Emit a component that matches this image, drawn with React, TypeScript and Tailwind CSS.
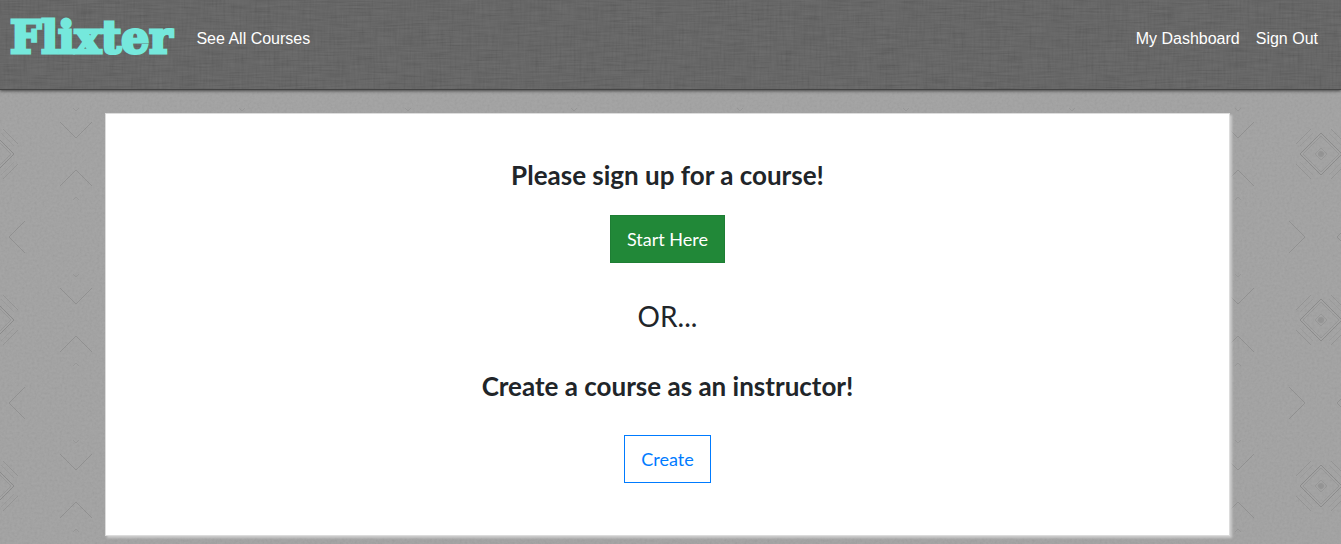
function LinenTexture() {
  return (
    <svg className="absolute inset-0 h-full w-full" aria-hidden="true">
      <defs>
        <filter id="linen-h" x="0" y="0" width="100%" height="100%">
          <feTurbulence type="fractalNoise" baseFrequency="0.04 0.6" numOctaves="2" seed="4" />
          <feColorMatrix type="matrix" values="1.4 0 0 0 -0.33  1.4 0 0 0 -0.33  1.4 0 0 0 -0.33  0 0 0 0 1" colorInterpolationFilters="sRGB" />
        </filter>
        <filter id="linen-v" x="0" y="0" width="100%" height="100%">
          <feTurbulence type="fractalNoise" baseFrequency="0.5 0.04" numOctaves="2" seed="9" />
          <feColorMatrix type="matrix" values="1.4 0 0 0 -0.33  1.4 0 0 0 -0.33  1.4 0 0 0 -0.33  0 0 0 0 1" colorInterpolationFilters="sRGB" />
        </filter>
      </defs>
      <rect width="100%" height="100%" filter="url(#linen-h)" opacity="0.07" />
      <rect width="100%" height="100%" filter="url(#linen-v)" opacity="0.04" />
    </svg>
  );
}

function DiamondTexture() {
  return (
    <svg className="absolute inset-0 h-full w-full" aria-hidden="true">
      <defs>
        <filter id="grain" x="0" y="0" width="100%" height="100%">
          <feTurbulence type="fractalNoise" baseFrequency="0.4" numOctaves="2" seed="2" />
          <feColorMatrix type="matrix" values="1.2 0 0 0 -0.1  1.2 0 0 0 -0.1  1.2 0 0 0 -0.1  0 0 0 0 1" colorInterpolationFilters="sRGB" />
        </filter>
        <pattern id="diamonds" x="-90" y="71" width="166" height="166" patternUnits="userSpaceOnUse">
          <g fill="none" stroke="#7f7f7f" strokeWidth="1">
            <path d="M83 62 L104 83 L83 104 L62 83 Z" strokeOpacity="0.65" />
            <path d="M83 65 L101 83 L83 101 L65 83 Z" strokeOpacity="0.3" />
            <path d="M83 77 L89 83 L83 89 L77 83 Z" strokeOpacity="0.3" />
            <path d="M58 73 L73 58 M93 58 L108 73 M58 93 L73 108 M93 108 L108 93" strokeOpacity="0.4" />
            <path d="M62 75 L75 62 M91 62 L104 75 M62 91 L75 104 M91 104 L104 91" strokeOpacity="0.2" />
            <path d="M0 67 L16 51 M150 51 L166 67 M0 99 L16 115 M150 115 L166 99" strokeOpacity="0.5" />
            <path d="M67 166 L51 150 M67 0 L51 16 M99 166 L115 150 M99 0 L115 16" strokeOpacity="0.5" />
            <path d="M0 40 L3 37 M166 40 L163 37 M0 126 L3 129 M166 126 L163 129" strokeOpacity="0.3" />
          </g>
          <circle cx="83" cy="83" r="3" fill="#858585" fillOpacity="0.5" />
        </pattern>
      </defs>
      <rect width="100%" height="100%" filter="url(#grain)" opacity="0.05" />
      <rect width="100%" height="100%" fill="url(#diamonds)" />
    </svg>
  );
}

export default function App() {
  return (
    <div className="relative isolate min-h-screen bg-[#a1a1a1] font-['Liberation_Sans',Arial,sans-serif]">
      <div className="absolute inset-0 -z-10 overflow-hidden">
        <DiamondTexture />
      </div>
      <header className="relative isolate border-b border-[#444444] bg-[#5e5e5e] shadow-[0_1px_3px_#444444]">
        <div className="absolute inset-0 -z-10 overflow-hidden">
          <LinenTexture />
        </div>
        <nav className="flex h-[89px] items-start pr-[23px] pl-[10px] text-base leading-6 text-white">
          <a
            href="#home"
            className="mr-6 pt-1 font-['DejaVu_Serif',serif] text-[44px] leading-[68px] font-bold text-[#75e8dc] [-webkit-text-stroke:3px_#75e8dc]"
          >
            Flixter
          </a>
          <a href="#courses" className="pt-[27px]">See All Courses</a>
          <div className="ml-auto flex gap-4 pt-[27px]">
            <a href="#dashboard">My Dashboard</a>
            <a href="#sign-out">Sign Out</a>
          </div>
        </nav>
      </header>
      <main className="mr-[111px] ml-[105px] pt-[23px] pb-2">
        <section className="flex flex-col items-center border border-[#dcdcdc] bg-white pt-[43px] pb-[52px] text-center font-['Lato',sans-serif] text-[#212529] shadow-[2px_2px_2px_#cccccc]">
          <h1 className="text-[26px] leading-9 font-bold">Please sign up for a course!</h1>
          <button type="button" className="mt-[22px] h-12 border border-[#1e7e34] bg-[#218838] px-4 text-lg text-white">
            Start Here
          </button>
          <p className="mt-8 text-[28px] leading-[42px]">OR...</p>
          <h2 className="mt-[31px] text-[26px] leading-9 font-bold">Create a course as an instructor!</h2>
          <button type="button" className="mt-[31px] h-12 border border-[#007bff] px-4 text-lg text-[#007bff]">
            Create
          </button>
        </section>
      </main>
    </div>
  );
}
